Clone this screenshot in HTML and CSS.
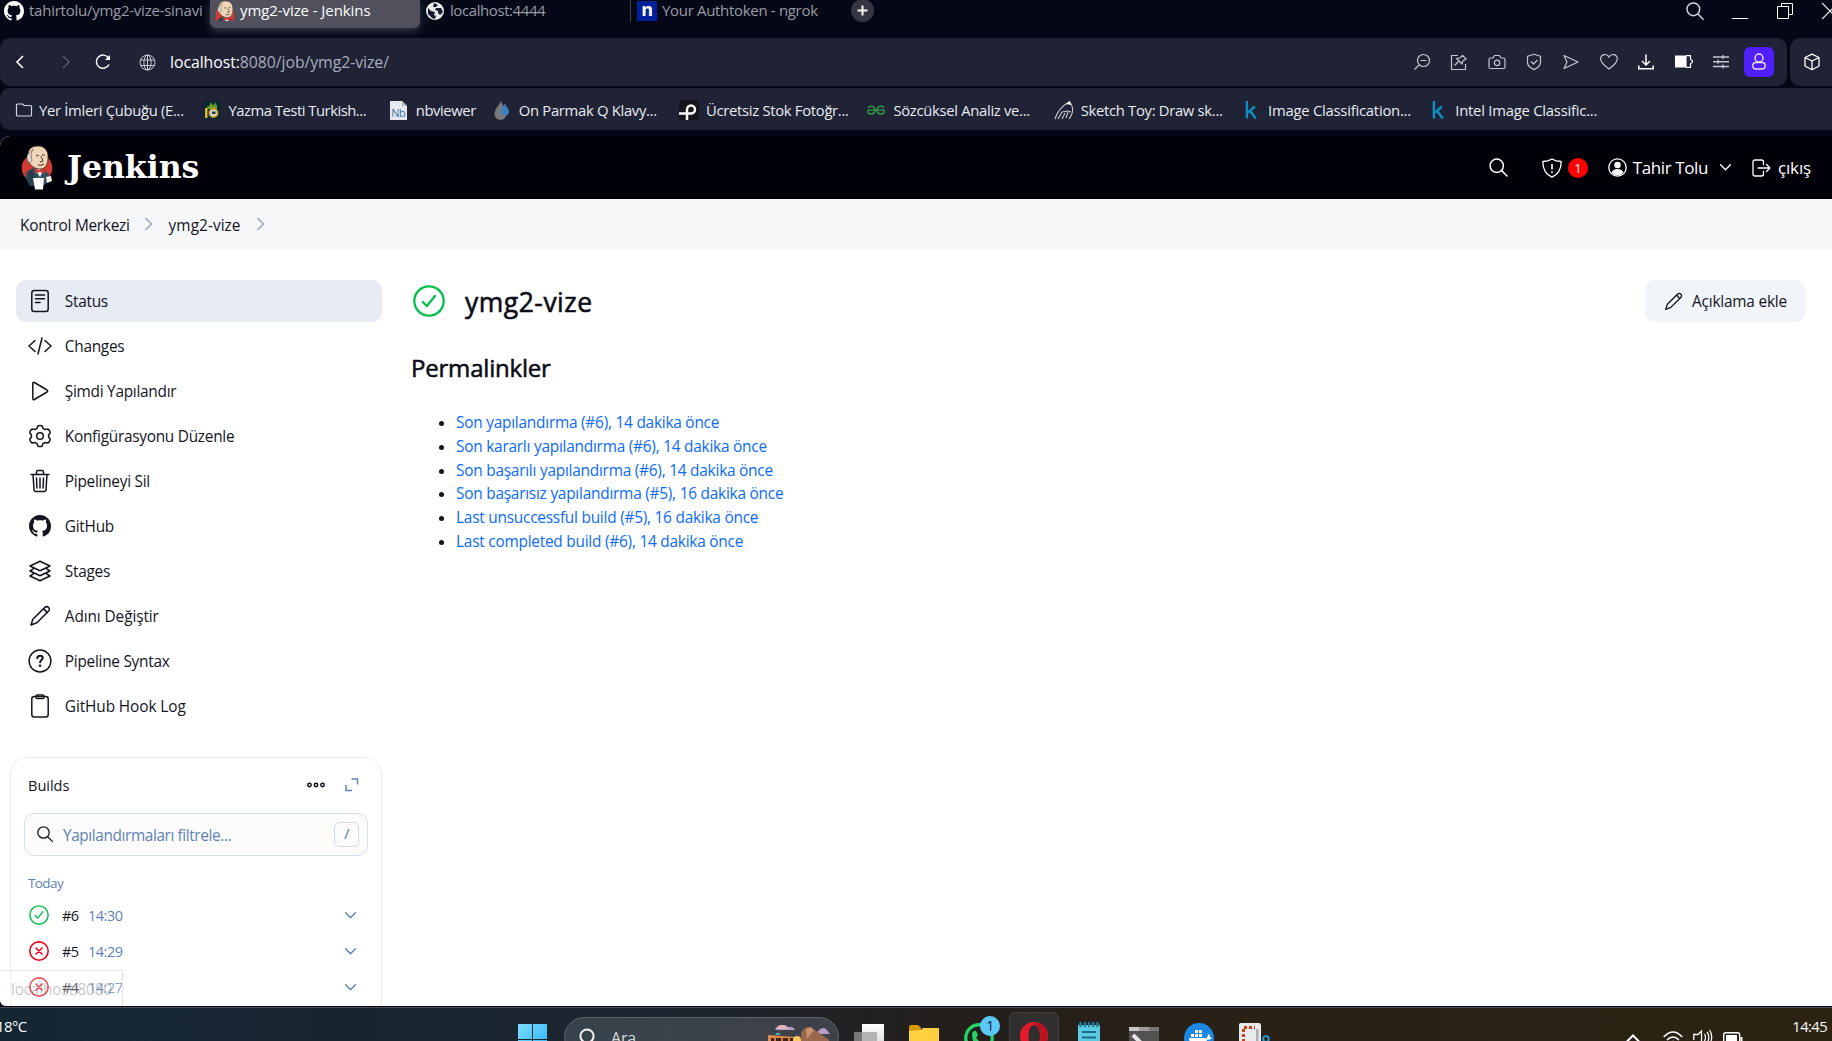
FILE: index.html
```html
<!DOCTYPE html>
<html lang="tr">
<head>
<meta charset="utf-8">
<title>ymg2-vize - Jenkins</title>
<link rel="stylesheet" href="styles.css">
</head>
<body>
<svg width="0" height="0" class="defs" aria-hidden="true">
  <defs>
    <symbol id="github" viewBox="0 0 16 16"><path fill="currentColor" d="M8 0C3.58 0 0 3.58 0 8c0 3.54 2.29 6.53 5.47 7.59.4.07.55-.17.55-.38 0-.19-.01-.82-.01-1.49-2.01.37-2.53-.49-2.69-.94-.09-.23-.48-.94-.82-1.13-.28-.15-.68-.52-.01-.53.63-.01 1.08.58 1.23.82.72 1.21 1.87.87 2.33.66.07-.52.28-.87.51-1.07-1.78-.2-3.64-.89-3.64-3.95 0-.87.31-1.59.82-2.15-.08-.2-.36-1.02.08-2.12 0 0 .67-.21 2.2.82.64-.18 1.32-.27 2-.27s1.36.09 2 .27c1.53-1.04 2.2-.82 2.2-.82.44 1.1.16 1.92.08 2.12.51.56.82 1.27.82 2.15 0 3.07-1.87 3.75-3.65 3.95.29.25.54.73.54 1.48 0 1.07-.01 1.93-.01 2.2 0 .21.15.46.55.38A8.01 8.01 0 0 0 16 8c0-4.42-3.58-8-8-8z"/></symbol>
    <symbol id="pencil" viewBox="0 0 24 24"><g fill="none" stroke="currentColor" stroke-width="1.7" stroke-linejoin="round" stroke-linecap="round"><path d="M2.2 21.8l2-6.2L17.3 2.6a2.7 2.7 0 0 1 4 .1 2.7 2.7 0 0 1 .1 3.9L8.6 19.4z"/><path d="M16 4.2l3.9 3.9"/></g></symbol>
    <symbol id="butler" viewBox="0 0 32 45">
      <ellipse cx="16" cy="23" rx="15.3" ry="14.5" fill="#d33833"/>
      <path d="M5 28l8-5 9 1 6 5-2 9-5 3H9l-4-7z" fill="#335061"/>
      <path d="M7 26l5-3 2 10 1 8H9L6 34z" fill="#2a3f4e"/>
      <path d="M14 24l5 8 4-8z" fill="#fff"/>
      <path d="M14 23l4 2 5-2 1 6-5-2-5 1z" fill="#d33833"/>
      <path d="M7 10C7 4 11 1 17 1s10 4 10 11c0 8-3 12-8 12-6 0-11-5-12-9z" fill="#f0d6b7" stroke="#49372f" stroke-width=".8"/>
      <path d="M7 9C5 12 6 17 9 18l2-2-1-7 2-5z" fill="#ded9d2" stroke="#49372f" stroke-width=".5"/>
      <path d="M15 11q2-2 3 0M21 10q2-1 3 1M20 11l2 5-3 1M17 20q3 1 6-1" fill="none" stroke="#49372f" stroke-width="1"/>
      <path d="M12 33h11l-1 11.5h-8z" fill="#fff"/><path d="M25 32l5-1 1 5-5 2z" fill="#f7f1e8"/>
    </symbol>
    <symbol id="lens" viewBox="0 0 24 24"><g fill="none" stroke="currentColor" stroke-width="1.7" stroke-linecap="round"><circle cx="10" cy="10" r="7.6"/><path d="M15.6 15.6l6.2 6.2"/></g></symbol>
    <symbol id="ok" viewBox="0 0 24 24"><g fill="none" stroke="#00c04b" stroke-width="1.7" stroke-linecap="round" stroke-linejoin="round"><circle cx="12" cy="12" r="11"/><path d="M7.4 12.7l3 3 6.1-7.5"/></g></symbol>
    <symbol id="fail" viewBox="0 0 24 24"><g fill="none" stroke="#f00014" stroke-width="1.9" stroke-linecap="round"><circle cx="12" cy="12" r="11"/><path d="M8.4 8.4l7.2 7.2M15.6 8.4l-7.2 7.2"/></g></symbol>
    <symbol id="down" viewBox="0 0 12 12"><path d="M1.5 3.5L6 8l4.5-4.5" fill="none" stroke="currentColor" stroke-width="1.3" stroke-linecap="round" stroke-linejoin="round"/></symbol>
    <symbol id="right" viewBox="0 0 12 16"><path d="M3 2.5L8.5 8 3 13.5" fill="none" stroke="currentColor" stroke-width="1.6" stroke-linecap="round" stroke-linejoin="round"/></symbol>
    <symbol id="kaggle" viewBox="0 0 20 20"><path d="M5.9 1v17.5M13.8 6.5L7 12.6M9 10.8l5.8 7.7" fill="none" stroke="#0d8fc0" stroke-width="2.4"/></symbol>
  </defs>
</svg>

<header class="tabs">
  <div class="tab tab-first"><svg class="i20"><use href="#github"/></svg><span>tahirtolu/ymg2-vize-sinavi</span></div>
  <div class="tab tab-active"><svg width="18" height="21"><use href="#butler" width="23" height="33" x="-2.5" y="0"/></svg><span>ymg2-vize - Jenkins</span></div>
  <div class="tab tab-local"><svg width="18" height="18" viewBox="0 0 18 18"><circle cx="9" cy="9" r="9" fill="#e8eaed"/><path d="M2 6l3 3 4 1-1 3 2 1-1 3-3-1-4-4zM8 1l4 2-2 2-3 0zM10 6l5 0 2 4-3 3-2-2 0-2-3-1z" fill="#161a2c"/></svg><span>localhost:4444</span></div>
  <div class="tab tab-ngrok"><i class="ngrok">n</i><span>Your Authtoken - ngrok</span></div>
  <div class="plus"><svg width="11" height="11"><path d="M5.5 .5v10M.5 5.5h10" stroke="#fff" stroke-width="2"/></svg></div>
  <div class="winctl">
    <svg width="20" height="20"><use href="#lens"/></svg>
    <svg width="16" height="20"><path d="M0 18.5h16" stroke="#fff"/></svg>
    <svg width="16" height="20" fill="none" stroke="#fff"><path d="M.5 6.5h11v12H.5zM4.5 6V3.5h11v11h-3.5"/></svg>
    <svg width="16" height="20"><path d="M0 3l16 16M16 3L0 19" stroke="#fff" stroke-width="1.2"/></svg>
  </div>
</header>

<div class="toolrow">
  <div class="toolbar">
    <svg class="back" width="10" height="14"><path d="M8 1L2 7l6 6" fill="none" stroke="#fff" stroke-width="1.6"/></svg>
    <svg class="fwd" width="10" height="14"><path d="M2 1l6 6-6 6" fill="none" stroke="#5a5e6e" stroke-width="1.4"/></svg>
    <svg class="reload" width="16" height="16" viewBox="0 0 16 16"><path d="M14 10.5A6.6 6.6 0 1 1 13.5 4" fill="none" stroke="#fff" stroke-width="1.5"/><path d="M15 1v5h-5z" fill="#fff"/></svg>
    <svg class="globe" width="17" height="17" viewBox="0 0 17 17" fill="none" stroke="#c9ccd6"><circle cx="8.5" cy="8.5" r="7.5"/><ellipse cx="8.5" cy="8.5" rx="3.6" ry="7.5"/><path d="M8.5 1v15M1.5 6h14M1.5 11.5h14"/></svg>
    <span class="url"><b>localhost:</b>8080/job/ymg2-vize/</span>
    <div class="tools">
      <svg viewBox="0 0 18 18"><circle cx="10.5" cy="7.5" r="6"/><path d="M6 12L1.5 16.5M7.5 7.5h6"/></svg>
      <svg viewBox="0 0 18 18"><path d="M8 2.5H1.5v14h14V11M4.5 12.5l4-4M6.5 5.5l5.5 5.5.8-3 3.4-2-3.7-3.7L10 4.9z" stroke-linejoin="round"/></svg>
      <svg viewBox="0 0 18 18"><path d="M2.5 5h2.500l1.500-2.500h5L13 5h2.500q1.500 0 1.500 1.500v7.500q0 1.500-1.500 1.500h-13Q1 15.500 1 14V6.500Q1 5 2.500 5z" stroke-linejoin="round"/><circle cx="9" cy="9.9" r="2.7"/></svg>
      <svg viewBox="0 0 18 18"><path d="M9 1.3l6.5 2v6c0 3.500-3 5.800-6.500 7.300-3.500-1.500-6.500-3.800-6.500-7.300v-6zM6 8.500l2.500 2.500L12.500 7" stroke-linejoin="round"/></svg>
      <svg viewBox="0 0 18 18"><path d="M2 2.5L16 9 2 15.500 5 9z" stroke-linejoin="round"/></svg>
      <svg viewBox="0 0 18 18"><path d="M9 16C5 13 .7 10 .7 6c0-5 6.300-6 8.300-2 2-4 8.300-3 8.300 2 0 4-4.300 7-8.300 10z"/></svg>
      <svg viewBox="0 0 18 18" class="bright"><path d="M9 1.500v10M5 8l4 4 4-4M1.800 12.500v3.200h14.400v-3.200" stroke-width="1.5"/></svg>
      <svg viewBox="0 0 18 18" class="bright"><path d="M.5 3h10.500v11H.5z" fill="#fff"/><path d="M11 2.700h4.500V6.500l1.800 1v2l-1.800 1v3.800H11" stroke-width="1.2"/></svg>
      <svg viewBox="0 0 18 18"><path d="M1 4h16M1 8.700h16M1 13.500h16M11 2v4M6 6.700v4M11 11.500v4" stroke-width="1.4"/></svg>
    </div>
    <div class="profile"><svg width="16" height="18" viewBox="0 0 16 18" fill="none" stroke="#e7e0ff" stroke-width="1.4"><circle cx="8" cy="5" r="4"/><rect x="1.8" y="9.500" width="12.4" height="6.5" rx="3.2"/></svg></div>
  </div>
  <div class="toolbar cube"><svg width="18" height="18" viewBox="0 0 18 18" fill="none" stroke="#fff" stroke-width="1.3" stroke-linejoin="round"><path d="M9 1.200l7 3.300v8.500l-7 3.800-7-3.800V4.500zM2 4.500l7 3.500 7-3.500M9 8v8.500"/></svg></div>
</div>

<nav class="bookmarks">
  <div class="bm bm-folder"><svg viewBox="0 0 20 20"><path d="M2.500 5v10q0 1 1 1h13q1 0 1-1V6.500q0-1-1-1H10L8.500 4h-5q-1 0-1 1z" fill="none" stroke="#d5d8e0" stroke-width="1.2"/></svg><span>Yer İmleri Çubuğu (E...</span></div>
  <div class="bm bm-tight"><svg viewBox="0 0 20 20"><path fill="#0b2533" d="M1 1h18v18H1z"/><path d="M5 8l1-3 1 2 2-5 2 4 2-4 1 4 1-2v5H5z" fill="#6ba32c"/><circle cx="11.500" cy="13" r="4.200" fill="#d5dadd" stroke="#c99a10" stroke-width="1.6"/><path d="M3 8h2.500v10H3z" fill="#e4b92a"/><path d="M10 11.500h3.500v2.500H10z" fill="#26323b"/></svg><span>Yazma Testi Turkish...</span></div>
  <div class="bm bm-short"><svg viewBox="0 0 20 20"><path fill="#e7e9ee" d="M1 1h12l5 5v14H1z"/><path d="M13 1v5h5" fill="#b3b8c2"/><text x="2.200" y="17" class="nb">Nb</text></svg><span>nbviewer</span></div>
  <div class="bm"><svg viewBox="0 0 20 20"><path d="M9 .5C7 6 2.500 9 2.500 14a6 6 0 0 0 12 0C14.500 9 10 6 9 .5z" fill="#77797c"/><path d="M13 3c-1.500 4-4 5.500-4 8.500a4 4 0 0 0 8 0C17 8.500 14 7 13 3z" fill="#3c80c0"/></svg><span>On Parmak Q Klavy...</span></div>
  <div class="bm"><svg viewBox="0 0 20 20"><rect width="20" height="20" rx="3" fill="#15161a"/><path d="M8 20V9.500a4 4 0 1 1 4 4H0" fill="none" stroke="#fff" stroke-width="2.500"/></svg><span>Ücretsiz Stok Fotoğr...</span></div>
  <div class="bm"><svg viewBox="0 0 20 20"><path d="M2 7.500c5-3 7 0 7 2.500H1.500h17H11c0-3 3-5.500 7-2.500M9 10c0 4-5 5.500-7 2.500V10M11 10c0 4 5 5.500 7 2.500V10" fill="none" stroke="#2f8d46" stroke-width="1.700"/></svg><span>Sözcüksel Analiz ve...</span></div>
  <div class="bm"><svg viewBox="0 0 20 20"><path d="M1 19C3 12 8 6 15 2l2 2c3 5 1 11-2 15M4 19l4-7 6-1 3 1M8 19l3-6M12 18l2-6" fill="none" stroke="#c8cad0" stroke-width="1.100"/><path d="M12 4l4-3 1 4z" fill="#fff"/></svg><span>Sketch Toy: Draw sk...</span></div>
  <div class="bm bm-wide"><svg viewBox="0 0 20 20"><use href="#kaggle"/></svg><span>Image Classification...</span></div>
  <div class="bm bm-wide"><svg viewBox="0 0 20 20"><use href="#kaggle"/></svg><span>Intel Image Classific...</span></div>
</nav>

<div class="page">
  <header class="jk-header">
    <svg width="32" height="45"><use href="#butler"/></svg>
    <span class="wordmark">Jenkins</span>
    <div class="jk-actions">
      <svg class="a-search" width="21" height="21"><use href="#lens"/></svg>
      <svg class="a-shield" width="20" height="20" viewBox="0 0 20 20" fill="none" stroke="#fff" stroke-width="1.3"><path d="M10 1C7 3 4 3.500 .8 3.500 .8 11 3 16 10 19.200 17 16 19.200 11 19.200 3.500 16 3.500 13 3 10 1z" stroke-linejoin="round"/><path d="M10 6v5.500M10 13.300v1.700" stroke-width="1.600"/></svg>
      <b class="badge">1</b>
      <svg class="a-user" width="19" height="19" viewBox="0 0 19 19"><circle cx="9.500" cy="9.500" r="8.700" fill="none" stroke="#fff" stroke-width="1.3"/><circle cx="9.500" cy="7" r="3.200" fill="#fff"/><path d="M3.500 14.500q1.500-3.500 6-3.500t6 3.500q-2.500 2.800-6 2.800t-6-2.800z" fill="#fff"/></svg>
      <span class="user">Tahir Tolu</span>
      <svg class="a-down" width="13" height="13"><use href="#down"/></svg>
      <svg class="a-out" width="19" height="18" viewBox="0 0 19 18" fill="none" stroke="#fff" stroke-width="1.3" stroke-linecap="round" stroke-linejoin="round"><path d="M11.500 5.500V3q0-2-2-2H3Q1 1 1 3v12q0 2 2 2h6.500q2 0 2-2v-2.500M6 9h12M14.500 5.500L18 9l-3.500 3.500"/></svg>
      <span class="user">çıkış</span>
    </div>
  </header>

  <nav class="crumbs">
    <span>Kontrol Merkezi</span><svg width="12" height="16"><use href="#right"/></svg>
    <span class="c2">ymg2-vize</span><svg width="12" height="16"><use href="#right"/></svg>
  </nav>

  <div class="body">
    <aside class="side">
      <ul class="tasks">
        <li class="on"><svg viewBox="0 0 24 24"><rect x="3.800" y="1.500" width="16.400" height="21" rx="2.500"/><path d="M7.500 6h9M7.500 9.800h9M7.500 13.500h4.500"/></svg><span>Status</span></li>
        <li><svg viewBox="0 0 24 24"><path d="M7 6.500L1 12l6 5.500M17 6.500l6 5.500-6 5.500M14 4l-4 16"/></svg><span>Changes</span></li>
        <li><svg viewBox="0 0 24 24"><path d="M4.800 4.500v15q0 1.800 1.600 1L19 13q1.400-1 0-2L6.400 3.500q-1.600-.8-1.600 1z"/></svg><span>Şimdi Yapılandır</span></li>
        <li><svg viewBox="0 0 24 24"><circle cx="12" cy="12" r="3.300"/><path d="M9.800 2q2.200-1.200 4.400 0l.8 2.400 2.200 1.200 2.700-.6q2 1.300 2.300 3.700L20.600 11v2l1.600 2.300q-.3 2.400-2.300 3.700l-2.700-.6-2.200 1.200-.8 2.400q-2.200 1.200-4.400 0L9 19.600l-2.200-1.200-2.700.6q-2-1.300-2.300-3.700L3.400 13v-2L1.800 8.700Q2.100 6.300 4.100 5l2.700.6L9 4.400z"/></svg><span>Konfigürasyonu Düzenle</span></li>
        <li><svg viewBox="0 0 24 24"><path d="M5 5.500l1 15q.1 2 2 2h8q1.900 0 2-2l1-15M3 5.500h18M8.500 5V3q0-1.500 1.500-1.500h4q1.500 0 1.500 1.500v2M12 9v10M8.500 9l.4 10M15.500 9l-.4 10"/></svg><span>Pipelineyi Sil</span></li>
        <li><svg class="gh"><use href="#github"/></svg><span>GitHub</span></li>
        <li><svg viewBox="0 0 24 24"><path d="M12 2.200L22 7 12 11.800 2 7zM5.200 10L2 12l10 4.800L22 12l-3.200-2M5.200 15L2 17l10 4.800L22 17l-3.200-2"/></svg><span>Stages</span></li>
        <li class="loose"><svg class="pen"><use href="#pencil"/></svg><span>Adını Değiştir</span></li>
        <li><svg viewBox="0 0 24 24"><circle cx="12" cy="12" r="10.900"/><path d="M9.300 9.300q0-2.500 2.700-2.500t2.700 2.300c0 2-2.600 2-2.600 4.200" stroke-width="2"/><circle cx="12" cy="16.800" r=".6" stroke-width="1.400"/></svg><span>Pipeline Syntax</span></li>
        <li class="loose"><svg viewBox="0 0 24 24"><rect x="3.800" y="2.500" width="16.400" height="20.500" rx="2.500"/><rect x="8" y="1" width="8" height="3.500" rx="1.200"/></svg><span>GitHub Hook Log</span></li>
      </ul>

      <section class="builds">
        <div class="b-head"><span>Builds</span>
          <svg class="dots" width="18" height="6" viewBox="0 0 18 6" fill="none" stroke="#14141f" stroke-width="1.500"><circle cx="2.500" cy="3" r="1.700"/><circle cx="9" cy="3" r="1.700"/><circle cx="15.500" cy="3" r="1.700"/></svg>
          <svg class="expand" width="14" height="14" viewBox="0 0 14 14" fill="none" stroke="#5e82b5" stroke-width="1.500"><path d="M6.500 1H12.500V6.500M1 7v5.500h6"/></svg>
        </div>
        <div class="filter"><svg width="18" height="18"><use href="#lens"/></svg><span>Yapılandırmaları filtrele...</span><kbd>/</kbd></div>
        <div class="day">Today</div>
        <div class="run"><svg class="st"><use href="#ok"/></svg><b>#6</b><span>14:30</span><svg class="dn"><use href="#down"/></svg></div>
        <div class="run"><svg class="st"><use href="#fail"/></svg><b>#5</b><span>14:29</span><svg class="dn"><use href="#down"/></svg></div>
        <div class="run"><svg class="st"><use href="#fail"/></svg><b>#4</b><span>14:27</span><svg class="dn"><use href="#down"/></svg></div>
      </section>
    </aside>

    <main class="main">
      <div class="title"><svg width="32" height="32"><use href="#ok"/></svg><h1>ymg2-vize</h1>
        <button class="desc"><svg width="19" height="19"><use href="#pencil"/></svg><span>Açıklama ekle</span></button></div>
      <h2>Permalinkler</h2>
      <ul class="links">
        <li><a>Son yapılandırma (#6), 14 dakika önce</a></li>
        <li><a>Son kararlı yapılandırma (#6), 14 dakika önce</a></li>
        <li><a>Son başarılı yapılandırma (#6), 14 dakika önce</a></li>
        <li><a>Son başarısız yapılandırma (#5), 16 dakika önce</a></li>
        <li><a>Last unsuccessful build (#5), 16 dakika önce</a></li>
        <li><a>Last completed build (#6), 14 dakika önce</a></li>
      </ul>
    </main>
  </div>
  <div class="bubble">localhost:8080</div>
</div>

<footer class="taskbar">
  <div class="weather">18°C</div>
  <svg class="win" width="29" height="20"><defs><linearGradient id="wg" x2="1" y2="1"><stop stop-color="#7fdcff"/><stop offset="1" stop-color="#1fb2f7"/></linearGradient></defs><path d="M0 0h14v15H0zM15 0h14v15H15zM0 16h14v14H0zM15 16h14v14H15z" fill="url(#wg)"/></svg>
  <div class="search">
    <svg width="18" height="24" viewBox="0 0 18 24" fill="none" stroke="#f2f4f6" stroke-width="2"><circle cx="8" cy="8" r="6.600"/><path d="M13 13l4 4"/></svg>
    <span>Ara</span>
    <svg class="art" width="64" height="18" viewBox="0 0 64 18"><path d="M7 4q2-3 5-2 3-4 8 0 5-1 7 3H8zM50 6q4-5 8-2l4 5H50z" fill="#b59cc8"/><path d="M9 2q4-4 9-1l2 3H9z" fill="#e7b0bd"/><path d="M0 10l26 2 1 7H0z" fill="#e08b4c"/><path d="M3 13h22v6H3z" fill="#3b2419"/><path d="M6 13h2v5H6zM13 13h2v5h-2zM20 13h2v5h-2z" fill="#d8753c"/><path d="M33 9Q35 2 41 2l6 3 14 10v4H33z" fill="#99694d"/><path d="M38 4l5-2 3 3-7 9z" fill="#c8936c"/><circle cx="29" cy="15" r="4" fill="#ffc95b"/><path d="M7 10q3-5 6 0z" fill="#50abb8"/></svg>
  </div>
  <div class="apps">
    <svg class="app" width="30" height="30" viewBox="0 0 30 30"><defs><linearGradient id="tv" x2="0" y2="1"><stop stop-color="#fff"/><stop offset="1" stop-color="#d4d4d4"/></linearGradient></defs><path d="M8 6h22v24H8z" fill="url(#tv)"/><path d="M0 14h8v16H0z" fill="#77797b"/><path d="M8 14h15v16H8z" fill="#b4b4b4"/></svg>
    <svg class="app" width="30" height="30" viewBox="1 0 30 30"><path d="M1 9q0-2 2-2h7l3 3v6H1z" fill="#d99a05"/><path d="M1 13l12-1 2-2h15q1 0 1 1v20H1z" fill="#ffd042"/></svg>
    <div class="app chat"><svg width="30" height="30" viewBox="0 0 30 30"><circle cx="15" cy="20" r="13.200" fill="none" stroke="#25d366" stroke-width="3.400"/><path d="M8 16q1-4 4-3l2 4-2 3 6 6 3-2 4 3v4H15Q8 25 8 16z" fill="#25d366"/></svg><b class="count">1</b></div>
    <div class="opera"><svg width="28" height="28" viewBox="0 0 28 28"><path fill-rule="evenodd" d="M14 0a14 14 0 0 1 0 28A14 14 0 0 1 14 0zM14 3C10.500 3 8.500 8 8.500 14s2 11 5.500 11 6-5 6-11-2.500-11-6-11z" fill="#e5192b"/><path d="M12 1Q27-1 28 15l-2 7-6 2Q23 3 12 1z" fill="#b9131f"/></svg></div>
    <svg class="app note" width="22" height="30" viewBox="1 0 22 30"><path d="M1 7h22v24H1z" fill="#5ecbe2"/><path d="M5 14h14M5 19.500h14M5 25h14" stroke="#176d8c" stroke-width="2"/><path d="M3.500 5v3M7.800 5v3M12 5v3M16.300 5v3M20.500 5v3" stroke="#1e7f9f" stroke-width="2.400" stroke-linecap="round"/></svg>
    <svg class="app term" width="30" height="30" viewBox="0 0 30 30"><path d="M0 9h30v22H0z" fill="#525252"/><path d="M0 9h10v4H0z" fill="#c7c7c7"/><path d="M10 9h10v4H10z" fill="#9d9d9d"/><path d="M20 9h10v4H20z" fill="#777"/><path d="M4 17l6 6-6 6" fill="none" stroke="#e7e7e7" stroke-width="4"/></svg>
    <svg class="app" width="30" height="30" viewBox="0 0 30 30"><circle cx="15" cy="20" r="15" fill="#1d87e4"/><path d="M5 20h18q1-4 2-4 1 1 1 3l2 1q-2 2-5 2-3 7-9 7-8 0-9-9z" fill="#fff"/><path d="M7 16h3v3H7zM11 16h3v3h-3zM15 16h3v3h-3zM11 12h3v3h-3zM15 12h3v3h-3z" fill="#fff"/></svg>
    <svg class="app" width="31" height="30" viewBox="1 0 31 30"><rect x="1" y="5" width="22" height="28" rx="2" fill="#e8eaec"/><path d="M5.500 29V9.500H17" fill="none" stroke="#d43e16" stroke-width="3" stroke-dasharray="3 2"/><path d="M18 11h2.500v17h-7v-3.500h4.500z" fill="#aab0b4"/><circle cx="28" cy="21" r="2.800" fill="none" stroke="#1e9fdb" stroke-width="1.800"/></svg>
  </div>
  <div class="tray">
    <svg width="14" height="12"><path d="M1 8.500l6-6 6 6" fill="none" stroke="#fff" stroke-width="2"/></svg>
    <svg class="wifi" width="20" height="13" fill="none" stroke="#fff" stroke-width="1.500"><path d="M.7 6Q10-4 19.300 6M4 9q6-6 12 0M7 12q3-3 6 0"/></svg>
    <svg width="20" height="14" fill="none" stroke="#fff" stroke-width="1.300"><path d="M8.500 13V2L5 5.500H.8V11M11.500 5q2 3 0 7M14 3q3 4 1 9M16.500 1q3.500 5 1.500 11"/></svg>
    <svg width="20" height="12"><rect x=".7" y="1.700" width="16" height="12" rx="2" fill="none" stroke="#fff" stroke-width="1.400"/><path d="M3 4h11v8H3zM17.500 6h2v5h-2z" fill="#fff"/></svg>
  </div>
  <div class="clock">14:45</div>
</footer>
</body>
</html>
```
FILE: styles.css
```css
* { box-sizing: border-box; }
html, body { height: 100%; }
body {
  margin: 0;
  display: flex;
  flex-direction: column;
  overflow: hidden;
  background: #030716;
  font-family: "Open Sans", "Noto Sans", sans-serif;
  font-size: 15.4px;
  letter-spacing: -0.27px;
  color: #14141f;
  white-space: nowrap;
}
svg { flex: none; display: block; }
ul { list-style: none; margin: 0; padding: 0; }
.defs { position: absolute; }

/* Tab strip */
.tabs { height: 38px; flex: none; display: flex; align-items: flex-start; color: #9a9ca5; letter-spacing: -0.25px; }
.tab { display: flex; align-items: center; height: 28px; padding-bottom: 7px; font-size: 15px; }
.tab span { margin-top: -1px; }
.i20 { width: 20px; height: 20px; color: #fff; }
.tab-first { width: 210px; padding-left: 4px; gap: 5px; }
.tab-active {
  width: 210px; padding-left: 6px; gap: 6px; color: #fff; letter-spacing: -0.08px;
  background: #50515d; border-radius: 0 0 6px 6px;
  box-shadow: 0 3px 9px rgba(120, 122, 140, .45);
}
.tab-local { width: 211px; padding-left: 6px; gap: 6px; letter-spacing: -0.42px; }
.tab-local { height: 22px; padding-bottom: 1px; border-right: 1px solid #40424e; }
.tab-ngrok { width: 220px; padding-left: 6px; gap: 5px; height: 22px; padding-bottom: 1px; letter-spacing: -0.32px; }
.ngrok {
  width: 20px; height: 20px; background: #001f9c; color: #fff;
  font: bold 18px/16px "Open Sans", sans-serif; text-align: center;
}
.plus {
  width: 23px; height: 23px; margin-top: -1px; border-radius: 50%;
  background: #343643; display: flex; align-items: center; justify-content: center;
}
.winctl { margin-left: auto; margin-right: -6px; display: flex; gap: 29px; color: #d5d7dd; }
.winctl svg:first-child { margin: 1px -2px 0 0; }

/* Address bar */
.toolrow { display: flex; gap: 3px; height: 48px; flex: none; margin-bottom: 2px; }
.toolbar { background: #1f2335; border-radius: 10px; height: 48px; display: flex; align-items: center; }
.toolbar:first-child { flex: 1; padding-right: 13px; }
.cube { width: 42px; padding-left: 13px; border-radius: 10px 0 0 10px; }
.back { margin-left: 15px; }
.fwd { margin-left: 36px; }
.reload { margin-left: 24px; }
.globe { margin-left: 27.5px; }
.url { margin-left: 14.5px; font-size: 15.8px; letter-spacing: -0.05px; color: #a9adbd; }
.url b { font-weight: 400; color: #fff; }
.tools { margin-left: auto; display: flex; gap: 19.4px; margin-right: 14px; }
.tools svg { width: 18px; height: 18px; fill: none; stroke: #c4c7d0; stroke-width: 1.2; }
.tools .bright { stroke: #fff; }
.profile { width: 30px; height: 30px; border-radius: 6px; background: #4f1fff; display: flex; align-items: center; justify-content: center; }

.bookmarks {
  height: 42px; flex: none; margin-bottom: 6px; padding: 1px 0 0 14px;
  display: flex; align-items: center;
  background: #1f2335; border-radius: 10px 0 0 10px;
  color: #e9ebf0; font-size: 14.8px; letter-spacing: -0.3px;
}
.bm { width: 187.3px; display: flex; gap: 7px; align-items: center; }
.bm svg { width: 20px; height: 20px; }
.bm-folder { gap: 5px; width: 187.5px; }
.bm-tight { letter-spacing: -0.48px; }
.bm-wide { letter-spacing: -0.22px; }
.bm-short { width: 103px; letter-spacing: -0.42px; }
.nb { font: 11px "Open Sans", sans-serif; fill: #3773a5; }

/* Jenkins page */
.page { flex: 1; min-height: 0; background: #fff; border-radius: 10px 0 0 6px; overflow: hidden; display: flex; flex-direction: column; position: relative; }
.jk-header { height: 63px; flex: none; background: #010009; color: #fff; display: flex; align-items: center; padding: 0 21px; }
.wordmark { margin: -3px 0 0 14px; font: bold 31.5px "DejaVu Serif", serif; letter-spacing: 0; }
.jk-actions { margin-left: auto; display: flex; align-items: center; font-size: 17px; letter-spacing: -0.4px; }
.a-shield { margin-left: 33px; }
.badge { width: 20px; height: 20px; margin-left: 6px; border-radius: 50%; background: #f00; font-size: 13px; font-weight: 400; line-height: 20px; text-align: center; }
.a-user { margin-left: 20px; margin-right: 6px; }
.a-down { margin-left: 11px; margin-right: 20px; }
.a-out { margin-right: 7px; }
.user:last-child { letter-spacing: -0.15px; }

.crumbs { height: 51px; flex: none; background: #f6f7f9; display: flex; align-items: center; padding: 1px 0 0 20px; }
.crumbs svg { color: #94abcd; margin-left: 13px; margin-top: -2px; }
.crumbs .c2 { margin-left: 14px; letter-spacing: 0.05px; }
.crumbs .c2 + svg { margin-left: 14px; }

.body { flex: 1; min-height: 0; display: flex; }
.side { width: 382px; flex: none; padding-top: 30px; }
.tasks { padding-left: 16px; display: flex; flex-direction: column; gap: 3px; }
.tasks li { height: 42px; border-radius: 10px; display: flex; align-items: center; gap: 12.5px; padding-left: 12.3px; }
.tasks span { margin-top: 1px; }
.tasks .on { background: #e6ebf4; }
.tasks .loose { letter-spacing: -0.1px; }
.tasks svg { width: 24px; height: 24px; fill: none; stroke: #14141f; stroke-width: 1.5; stroke-linecap: round; stroke-linejoin: round; }
.tasks .gh, .tasks .pen { width: 22px; height: 22px; margin: 0 1px; stroke: none; }

.builds { margin: 30px 0 0 10px; border: 1px solid #e8ebf3; border-radius: 18px; height: 300px; padding: 0 13px 0 13px; }
.b-head { height: 55px; display: flex; align-items: center; padding-left: 4px; font-size: 14.6px; letter-spacing: -0.05px; }
.b-head span { margin-top: -2px; }
.dots { margin: -2px 0 0 auto; }
.expand { margin: -2px 9px 0 20px; }
.filter { height: 43px; border: 1px solid #d3dcec; border-radius: 10px; background: #fcfcfd; display: flex; align-items: center; padding: 0 8px 0 11px; gap: 9px; color: #5e82b5; letter-spacing: -0.4px; }
.filter span { margin-top: 1px; }
.filter svg { color: #14141f; margin-top: -1px; }
kbd { margin-left: auto; width: 25px; height: 25px; border: 1px solid #d3dcec; border-radius: 5px; font: 14px/22px "Open Sans", sans-serif; text-align: center; color: #4a6a9c; }
.day { height: 41px; line-height: 42px; padding: 6px 0 0 4px; font-size: 13.5px; letter-spacing: -0.6px; color: #5e82b5; }
.run { height: 36px; display: flex; align-items: center; padding-left: 5px; font-size: 14.5px; letter-spacing: -0.5px; color: #5e82b5; }
.run b { font-weight: 400; color: #14141f; margin-left: 13px; width: 26px; }
.st { width: 20px; height: 20px; }
.dn { width: 13px; height: 13px; margin-left: auto; margin-right: 11px; }

.main { flex: 1; padding: 30px 27px 0 29px; }
.title { height: 42px; display: flex; align-items: center; }
.title > svg { margin-left: 2px; }
h1, h2 { font-weight: 400; margin: 0; -webkit-text-stroke: 0.55px currentColor; color: #0c0c16; }
h1 { font-size: 26.5px; letter-spacing: 0.5px; margin: 2px 0 0 20px; }
h2 { font-size: 24px; letter-spacing: -0.2px; margin-top: 28px; line-height: 36px; }
.desc { margin-left: auto; width: 160px; height: 42px; border: 0; border-radius: 10px; background: #f1f5f9; display: flex; align-items: center; gap: 9px; padding: 0 0 0 19px; font: inherit; letter-spacing: -0.2px; color: inherit; }
.links { list-style: disc; padding-left: 45px; margin-top: 25px; line-height: 23.8px; letter-spacing: -0.23px; }
.links a { color: #0b6aff; }

.bubble {
  position: absolute; left: 0; bottom: 0; width: 123px; height: 36px;
  border: 1px solid #e3e3e8; border-width: 1px 1px 0 0; padding: 8px 11px;
  background: rgba(255, 255, 255, .3); color: rgba(60, 60, 60, .3); letter-spacing: -0.2px;
}

/* Taskbar */
.taskbar { height: 35px; flex: none; border-top: 1px solid #030716; background: linear-gradient(90deg, #152633, #1b2530 35%, #241f1c 52%, #2a2116 70%, #2b2313); display: flex; position: relative; color: #fff; box-shadow: inset 0 1px #474d55; overflow: hidden; }
.weather { width: 518px; padding-top: 9px; margin-left: -4px; font-size: 15px; letter-spacing: -0.6px; }
.win { margin: 17px 17px 0 4px; }
.search { flex: none; margin-top: 10px; width: 275px; height: 40px; border-radius: 20px; border: 1px solid #5b646c; background: linear-gradient(90deg, #37434c, #40414a); display: flex; padding: 10px 6px 0 14px; gap: 14px; color: #d6dade; font-size: 16px; letter-spacing: -0.2px; }
.search span { margin-top: -1px; }
.art { margin: -3px 0 0 auto; }
.apps { display: flex; margin-left: 15px; }
.app { margin: 11px 25px 0 0; }
.chat { width: 36px; height: 24px; margin: 11px 9px 0 0; position: relative; }
.count {
  position: absolute; left: 16px; top: -2px; width: 20px; height: 20px; border-radius: 50%;
  background: #5cc8fb; color: #10222c; font: 14px/19px "Open Sans", sans-serif; text-align: center;
}
.opera { width: 50px; height: 40px; margin-top: 5px; padding: 9px 10px; border: 1px solid #3f3d3e; border-radius: 6px; background: #302e2f; }
.note { margin-left: 19px; margin-right: 29px; }
.tray { display: flex; margin-left: auto; margin-right: 49px; }
.tray svg { margin: 26px 0 0 10px; }
.tray .wifi { margin-left: 23px; margin-top: 24px; }
.tray .wifi + svg { margin-top: 22px; }
.tray .wifi + svg + svg { margin-top: 24px; }
.clock { padding-top: 9px; margin-right: 5px; font-size: 14.8px; letter-spacing: -0.6px; }
```
